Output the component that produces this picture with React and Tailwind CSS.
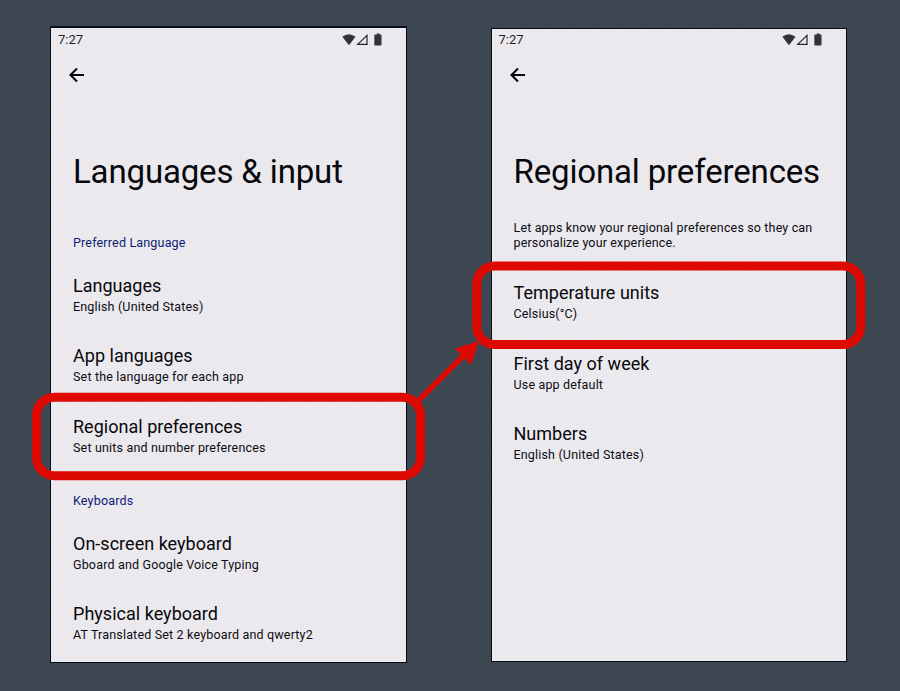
function StatusIcons() {
  return (
    <svg className="h-[14px] w-[42px]" viewBox="0 0 42 14">
      <path d="M0.3 3.800Q6.800 -1.200 13.500 3.800L7 12.200Z" fill="#333337" />
      <path d="M15.700 11.400H25V2.400Z" fill="none" stroke="#24242c" strokeWidth="1.200" />
      <path d="M33.100 1.600h1.600V0.600h3v1h1q.8 0 .8.9v9q0 .9-.8.9h-5.600q-.8 0-.8-.9v-9q0-.9.8-.9Z" fill="#333337" />
    </svg>
  );
}

function Header({ title }) {
  return (
    <header>
      <div className="flex h-6 items-center justify-between pr-[22.5px] pb-px pl-[7px]">
        <span className="text-[13px] leading-4 text-[#1f1f26]">7:27</span>
        <StatusIcons />
      </div>
      <div className="flex h-[46px] items-center pl-[18px]">
        <svg className="h-4 w-4" viewBox="0 0 16 16" fill="none" stroke="#08080c" strokeWidth="2.1">
          <path d="M15 8H1.8M8 1.5L1.5 8L8 14.5" />
        </svg>
      </div>
      <h1 className="mt-[52px] pl-[22px] text-[33px] leading-[44px] tracking-[-0.15px] whitespace-nowrap">{title}</h1>
    </header>
  );
}

function Row({ title, detail }) {
  return (
    <li className="h-[70.5px] pl-[22px] whitespace-nowrap">
      <div className="text-[18px] leading-6 tracking-[0.02px]">{title}</div>
      <div className="text-[12.5px] leading-[17px] tracking-[0.17px] text-[#0c0c12]">{detail}</div>
    </li>
  );
}

const Label = ({ children }) => (
  <h2 className="pl-[22px] text-[12.5px] leading-4 tracking-[0.18px] text-[#0c1a78]">{children}</h2>
);

const screen =
  "shrink-0 bg-[#ebe9ee] bg-[repeating-linear-gradient(90deg,#e4e2f044_0_1px,transparent_1px_3px),repeating-linear-gradient(0deg,#f2f0e855_0_1px,transparent_1px_3px)]";

export default function App() {
  return (
    <main className="relative flex h-[691px] w-[900px] items-start overflow-hidden bg-[#3d4751] pl-[51px] font-[Roboto,sans-serif] text-[#08080c]">
      <section className={`${screen} mt-7 h-[634px] w-[355px] shadow-[0_0_0_1px_#080b18,0_-1px_0_1px_#08102c]`}>
        <Header title="Languages & input" />
        <div className="pt-[41px]"><Label>Preferred Language</Label></div>
        <ul className="pt-[22.75px]">
          <Row title="Languages" detail="English (United States)" />
          <Row title="App languages" detail="Set the language for each app" />
          <Row title="Regional preferences" detail="Set units and number preferences" />
        </ul>
        <div className="pt-[8px]"><Label>Keyboards</Label></div>
        <ul className="pt-[22.5px]">
          <Row title="On-screen keyboard" detail="Gboard and Google Voice Typing" />
          <Row title="Physical keyboard" detail="AT Translated Set 2 keyboard and qwerty2" />
        </ul>
      </section>
      <section className={`${screen} mt-[29px] ml-[86px] h-[632px] w-[354px] shadow-[0_0_0_1px_#080b18]`}>
        <div className="-mt-px -ml-[0.5px]">
          <Header title="Regional preferences" />
          <p className="pt-[26px] pl-[22px] text-[12.5px] leading-[15px] tracking-[0.15px] text-[#0c0c12]">
            Let apps know your regional preferences so they can<br />personalize your experience.
          </p>
          <ul className="pt-[31px]">
            <Row title="Temperature units" detail="Celsius(°C)" />
            <Row title="First day of week" detail="Use app default" />
            <Row title="Numbers" detail="English (United States)" />
          </ul>
        </div>
      </section>
      <svg className="absolute inset-0 h-full w-full" viewBox="0 0 900 691" fill="none">
        <path d="M418 401L465 354" stroke="#dd0903" strokeWidth="5.5" />
        <path d="M479 341L455 348.5L471 365Z" fill="#dd0903" />
        <rect x="36.5" y="397.2" width="384" height="78.5" rx="18" stroke="#dd0903" strokeWidth="9" />
        <rect x="476.8" y="266" width="384" height="78.5" rx="18" stroke="#dd0903" strokeWidth="9" />
      </svg>
    </main>
  );
}
